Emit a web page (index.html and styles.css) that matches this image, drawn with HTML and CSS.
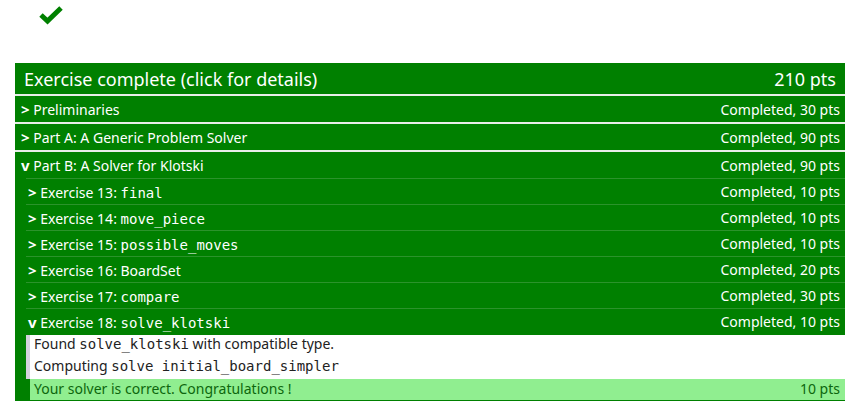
FILE: index.html
```html
<!DOCTYPE html>
<html>
<head>
<meta charset="utf-8">
<link rel="stylesheet" href="styles.css">
</head>
<body>
<div class="page">
  <div class="status">
    <svg class="check" width="26" height="20" viewBox="0 0 26 20">
      <polyline points="3,10 9.5,16 23,3" fill="none" stroke="#008000" stroke-width="5"/>
    </svg>
  </div>
  <div class="report">
    <div class="summary">
      <span>Exercise complete (click for details)</span>
      <span>210 pts</span>
    </div>
    <div class="section">
      <div class="row top"><span><b class="arrow">&gt;</b> Preliminaries</span><span>Completed, 30 pts</span></div>
    </div>
    <div class="section">
      <div class="row top"><span><b class="arrow">&gt;</b> Part A: A Generic Problem Solver</span><span>Completed, 90 pts</span></div>
    </div>
    <div class="section">
      <div class="row top"><span><b class="arrow">v</b> Part B: A Solver for Klotski</span><span>Completed, 90 pts</span></div>
      <div class="sub">
        <div class="row nested"><span><b class="arrow">&gt;</b> Exercise 13: <code>final</code></span><span>Completed, 10 pts</span></div>
        <div class="row nested"><span><b class="arrow">&gt;</b> Exercise 14: <code>move_piece</code></span><span>Completed, 10 pts</span></div>
        <div class="row nested"><span><b class="arrow">&gt;</b> Exercise 15: <code>possible_moves</code></span><span>Completed, 10 pts</span></div>
        <div class="row nested"><span><b class="arrow">&gt;</b> Exercise 16: BoardSet</span><span>Completed, 20 pts</span></div>
        <div class="row nested"><span><b class="arrow">&gt;</b> Exercise 17: <code>compare</code></span><span>Completed, 30 pts</span></div>
        <div class="row nested"><span><b class="arrow">v</b> Exercise 18: <code>solve_klotski</code></span><span>Completed, 10 pts</span></div>
        <div class="details">
          <div class="line info">Found <code>solve_klotski</code> with compatible type.</div>
          <div class="line info">Computing <code>solve initial_board_simpler</code></div>
          <div class="line success"><span>Your solver is correct. Congratulations !</span><span>10 pts</span></div>
        </div>
      </div>
    </div>
  </div>
</div>
</body>
</html>
```
FILE: styles.css
```css
html, body {
  margin: 0;
  background: #fff;
}

.page {
  padding: 0 19px 0 15px;
  font-family: "Noto Sans", "Open Sans", sans-serif;
  font-size: 14px;
}

.status {
  height: 63px;
  padding: 5px 0 0 23px;
  box-sizing: border-box;
}

.check {
  display: block;
}

.report {
  background: #008000;
  color: #fff;
  padding-bottom: 1px;
}

.summary {
  display: flex;
  justify-content: space-between;
  align-items: center;
  height: 31px;
  padding: 0 9px 0 9px;
  font-size: 18px;
}

.section {
  border-top: 2px solid #e8eee8;
}

.row {
  display: flex;
  justify-content: space-between;
  align-items: center;
  height: 26px;
  padding-right: 5px;
  white-space: pre;
}

.top {
  padding-left: 6px;
}

.arrow {
  font-weight: bold;
  font-size: 15px;
}

code {
  font-family: "DejaVu Sans Mono", monospace;
  font-size: 14px;
}

.sub {
  margin-left: 11px;
}

.nested {
  border-top: 1px solid #2b932b;
  height: 25px;
  padding-left: 2px;
}

.details {
  margin-top: 1px;
}

.line {
  box-sizing: border-box;
  height: 22px;
  line-height: 17px;
  padding: 0 5px 0 4px;
  white-space: pre;
}

.info {
  background: #fff;
  color: #222;
  border-left: 4px solid #d4d2dc;
}

.success {
  display: flex;
  justify-content: space-between;
  align-items: center;
  background: #90ee90;
  color: #0d660d;
  margin-left: 4px;
  height: 21px;
  padding-bottom: 2px;
}
```
